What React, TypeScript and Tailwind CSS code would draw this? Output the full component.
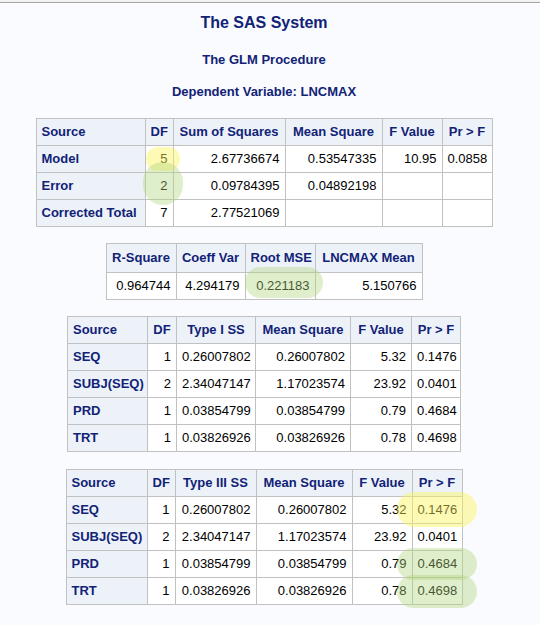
import React from "react";

const F = { fontFamily: '"Liberation Sans", Arial, Helvetica, sans-serif' };

function SasTable({
  cols,
  header,
  rows,
  className = "",
}: {
  cols: number[];
  header: string[];
  rows: string[][];
  className?: string;
}) {
  const total = cols.reduce((a, b) => a + b, 0);
  return (
    <table
      className={`table-fixed border-collapse border border-[#c1c1c1] text-[13px] ${className}`}
      style={{ width: total }}
    >
      <colgroup>
        {cols.map((w, i) => (
          <col key={i} style={{ width: w }} />
        ))}
      </colgroup>
      <thead>
        <tr className="h-[27px]">
          {header.map((h, i) => (
            <th
              key={i}
              className={`border border-[#c1c1c1] bg-[#edf2f9] px-[5px] font-bold text-[#112277] whitespace-nowrap ${
                i === 0 ? "text-left" : "text-center"
              }`}
            >
              {h}
            </th>
          ))}
        </tr>
      </thead>
      <tbody>
        {rows.map((r, ri) => (
          <tr key={ri} className="h-[27px]">
            {r.map((c, ci) =>
              ci === 0 ? (
                <th
                  key={ci}
                  className="border border-[#c1c1c1] bg-[#edf2f9] px-[5px] text-left font-bold text-[#112277] whitespace-nowrap"
                >
                  {c}
                </th>
              ) : (
                <td
                  key={ci}
                  className="border border-[#c1c1c1] bg-white px-[5px] text-right text-black whitespace-nowrap"
                >
                  {c}
                </td>
              )
            )}
          </tr>
        ))}
      </tbody>
    </table>
  );
}

export default function App() {
  return (
    <div className="relative min-h-[625px] w-[540px] overflow-hidden bg-[#fafbfe]" style={F}>
      <div className="h-[2px] bg-[#f2f2f2]" />
      <div className="h-px bg-[#a3a3a3]" />
      <div className="h-px bg-white" />
      <div className="flex w-[528px] flex-col items-center">
        <div className="mt-[10px] h-[18px] text-[16px] font-bold leading-[18px] text-[#112277]">
          The SAS System
        </div>
        <div className="mt-[20px] h-[16px] text-[13px] font-bold leading-[16px] text-[#112277]">
          The GLM Procedure
        </div>
        <div className="mt-[16px] h-[16px] text-[13px] font-bold leading-[16px] text-[#112277]">
          Dependent Variable: LNCMAX
        </div>
        <SasTable
          className="mt-[18px]"
          cols={[109, 28, 112, 97, 60, 50]}
          header={["Source", "DF", "Sum of Squares", "Mean Square", "F Value", "Pr > F"]}
          rows={[
            ["Model", "5", "2.67736674", "0.53547335", "10.95", "0.0858"],
            ["Error", "2", "0.09784395", "0.04892198", "", ""],
            ["Corrected Total", "7", "2.77521069", "", "", ""],
          ]}
        />
        <table className="mt-[16px] table-fixed border-collapse border border-[#c1c1c1] text-[13px]" style={{ width: 316 }}>
          <colgroup>
            <col style={{ width: 70 }} />
            <col style={{ width: 69 }} />
            <col style={{ width: 70 }} />
            <col style={{ width: 107 }} />
          </colgroup>
          <thead>
            <tr className="h-[29px]">
              {["R-Square", "Coeff Var", "Root MSE", "LNCMAX Mean"].map((h) => (
                <th
                  key={h}
                  className="border border-[#c1c1c1] bg-[#edf2f9] px-[5px] text-center font-bold text-[#112277] whitespace-nowrap"
                >
                  {h}
                </th>
              ))}
            </tr>
          </thead>
          <tbody>
            <tr className="h-[27px]">
              {["0.964744", "4.294179", "0.221183", "5.150766"].map((v) => (
                <td key={v} className="border border-[#c1c1c1] bg-white px-[5px] text-right text-black">
                  {v}
                </td>
              ))}
            </tr>
          </tbody>
        </table>
        <SasTable
          className="mt-[16px]"
          cols={[80, 29, 79, 95, 61, 49]}
          header={["Source", "DF", "Type I SS", "Mean Square", "F Value", "Pr > F"]}
          rows={[
            ["SEQ", "1", "0.26007802", "0.26007802", "5.32", "0.1476"],
            ["SUBJ(SEQ)", "2", "2.34047147", "1.17023574", "23.92", "0.0401"],
            ["PRD", "1", "0.03854799", "0.03854799", "0.79", "0.4684"],
            ["TRT", "1", "0.03826926", "0.03826926", "0.78", "0.4698"],
          ]}
        />
        <SasTable
          className="mt-[17px]"
          cols={[81, 28, 81, 96, 60, 50]}
          header={["Source", "DF", "Type III SS", "Mean Square", "F Value", "Pr > F"]}
          rows={[
            ["SEQ", "1", "0.26007802", "0.26007802", "5.32", "0.1476"],
            ["SUBJ(SEQ)", "2", "2.34047147", "1.17023574", "23.92", "0.0401"],
            ["PRD", "1", "0.03854799", "0.03854799", "0.79", "0.4684"],
            ["TRT", "1", "0.03826926", "0.03826926", "0.78", "0.4698"],
          ]}
        />
      </div>

      {/* highlight ellipses */}
      <div className="pointer-events-none absolute left-[146px] top-[147px] h-[24px] w-[34px] rounded-full bg-[rgba(250,245,90,0.45)]" />
      <div className="pointer-events-none absolute left-[143px] top-[162px] h-[43px] w-[40px] rounded-full bg-[rgba(175,212,125,0.4)]" />
      <div className="pointer-events-none absolute left-[245px] top-[267px] h-[31px] w-[78px] rounded-full bg-[rgba(175,212,125,0.4)]" />
      <div className="pointer-events-none absolute left-[397px] top-[492px] h-[35px] w-[80px] rounded-full bg-[rgba(250,245,90,0.45)]" />
      <div className="pointer-events-none absolute left-[397px] top-[548px] h-[32px] w-[80px] rounded-full bg-[rgba(175,212,125,0.4)]" />
      <div className="pointer-events-none absolute left-[397px] top-[575px] h-[33px] w-[80px] rounded-full bg-[rgba(175,212,125,0.4)]" />
    </div>
  );
}
